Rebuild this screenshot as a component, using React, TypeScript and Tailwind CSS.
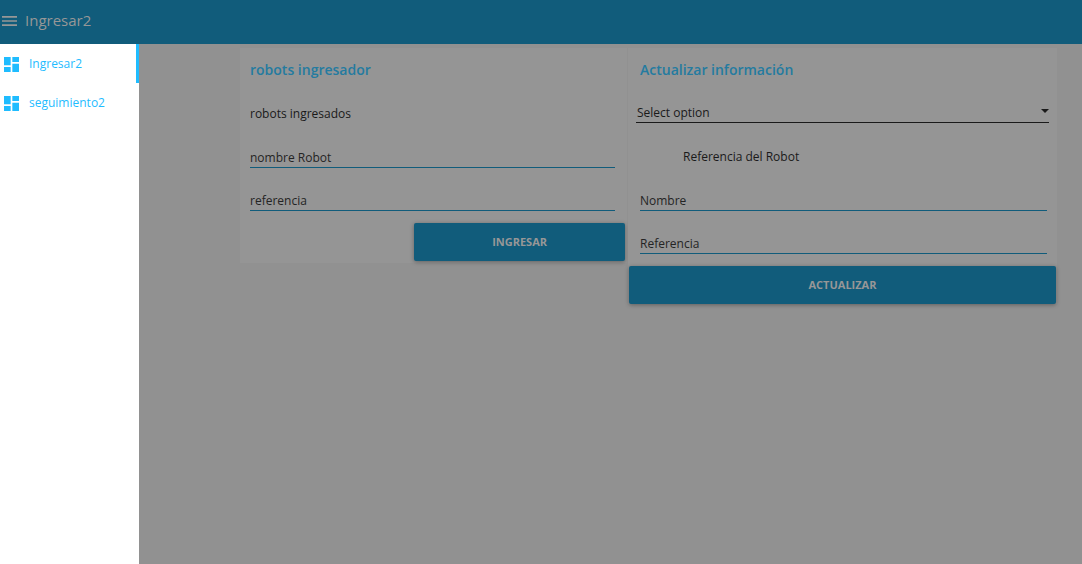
import { useState } from "react";

const navItems = ["Ingresar2", "seguimiento2"];

function DashboardIcon() {
  return (
    <svg viewBox="3 3 18 18" className="mt-px size-[15px] shrink-0" fill="currentColor" aria-hidden="true">
      <path d="M3 13h8V3H3v10zm0 8h8v-6H3v6zm10 0h8V11h-8v10zm0-18v6h8V3h-8z" />
    </svg>
  );
}

function TextField({ label }: { label: string }) {
  return (
    <div className="h-[43px] pt-3">
      <input
        type="text"
        aria-label={label}
        placeholder={label}
        className="block h-[22px] w-full border-b border-[#115c7b] bg-transparent pt-0.5 text-[12px] leading-5 text-[#242424] outline-none placeholder:text-[#242424] placeholder:opacity-100"
      />
    </div>
  );
}

function ActionButton({ label }: { label: string }) {
  return (
    <button
      type="button"
      className="h-[38px] w-full rounded-xs bg-[#115c7b] text-[11px] font-bold text-[#979797] uppercase shadow-[0_1px_4px_rgba(0,0,0,0.35)]"
    >
      {label}
    </button>
  );
}

export default function App() {
  const [active, setActive] = useState(0);
  return (
    <div className="flex min-h-screen flex-col bg-[#919191] font-['Segoe_UI','Open_Sans',sans-serif] text-[12px] text-[#1a1a1a]">
      <header className="flex h-11 items-center gap-2 bg-[#115c7b] px-0.5 pb-1 text-[#979797]">
        <button type="button" aria-label="Menu" className="flex pt-0.5">
          <svg viewBox="3 6 18 12" className="h-[10px] w-[15px]" fill="currentColor" aria-hidden="true">
            <path d="M3 18h18v-2H3v2zm0-5h18v-2H3v2zm0-7v2h18V6H3z" />
          </svg>
        </button>
        <h1 className="text-[15px] leading-5 font-medium">Ingresar2</h1>
      </header>

      <div className="flex flex-1">
        <nav className="w-[139px] shrink-0 bg-white">
          {navItems.map((item, i) => (
            <a
              key={item}
              href={`#${item}`}
              onClick={() => setActive(i)}
              className={`flex h-[39px] items-center gap-2.5 border-r-3 pl-1 text-[12px] text-[#1fbcff] ${
                active === i ? "border-[#1fbcff]" : "border-transparent"
              }`}
            >
              <DashboardIcon />
              {item}
            </a>
          ))}
        </nav>

        <main className="grid flex-1 grid-cols-[387fr_429fr] items-start gap-px pt-1 pr-[25px] pl-[101px]">
          <section className="bg-[#959595] pb-0.5">
            <h2 className="flex h-[43px] items-center px-2.5 text-[14px] font-semibold text-[#247ba0]">
              robots ingresador
            </h2>
            <p className="flex h-[43px] items-center px-2.5 pt-0.5">robots ingresados</p>
            <div className="pr-3 pl-2.5">
              <TextField label="nombre Robot" />
              <TextField label="referencia" />
            </div>
            <div className="ml-auto w-[55%] pt-[3px] pr-0.5">
              <ActionButton label="Ingresar" />
            </div>
          </section>

          <section className="bg-[#959595]">
            <h2 className="flex h-[43px] items-center px-3 text-[14px] font-semibold text-[#247ba0]">
              Actualizar información
            </h2>
            <div className="h-[43px] px-2 pt-2.5">
              <div className="relative">
                <select
                  aria-label="Select option"
                  className="block h-[22px] w-full appearance-none border-b border-[#1a1a1a] bg-transparent pt-0.5 pl-px text-[12px] leading-5 outline-none"
                >
                  <option>Select option</option>
                </select>
                <svg viewBox="0 0 8 4" className="pointer-events-none absolute top-2 right-0 h-1 w-2" aria-hidden="true">
                  <path d="M0 0h8L4 4z" fill="currentColor" />
                </svg>
              </div>
            </div>
            <p className="flex h-[43px] items-center pt-0.5 pl-[55px]">Referencia del Robot</p>
            <div className="pr-2.5 pl-3">
              <TextField label="Nombre" />
              <TextField label="Referencia" />
            </div>
            <div className="px-px pt-[3px]">
              <ActionButton label="Actualizar" />
            </div>
          </section>
        </main>
      </div>
    </div>
  );
}
